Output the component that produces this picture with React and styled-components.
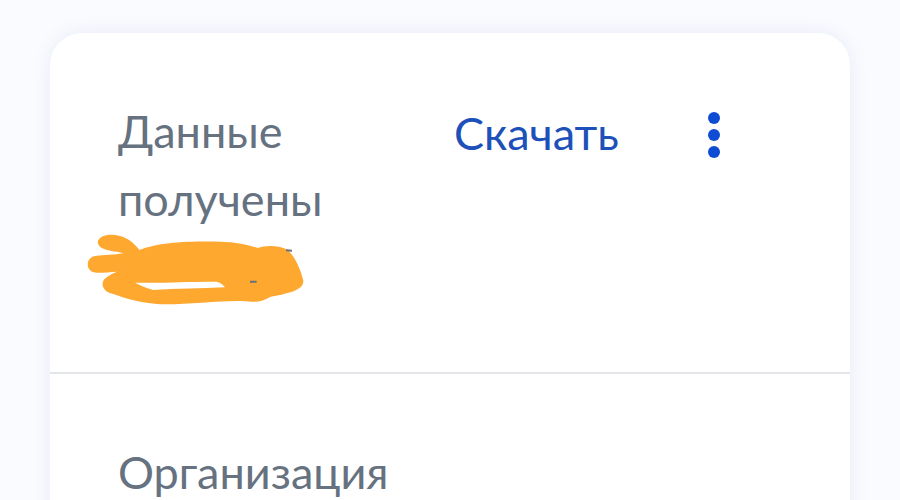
import React from "react";
import styled, { createGlobalStyle } from "styled-components";

const GlobalStyle = createGlobalStyle`
  html, body {
    margin: 0;
    height: 100%;
    overflow: hidden;
    background: #fafbfe;
  }
  body {
    font-family: "Lato", "Noto Sans", sans-serif;
  }
`;

export default function App() {
  return (
    <>
      <GlobalStyle />
      <Page>
        <Card>
          <TopSection>
            <Status>
              <Label>Данные получены</Label>
              <Scribble />
            </Status>
            <DownloadLink href="#">Скачать</DownloadLink>
            <MenuDots aria-label="Меню">
              <span />
              <span />
              <span />
            </MenuDots>
          </TopSection>
          <Section>
            <Label>Организация</Label>
          </Section>
        </Card>
      </Page>
    </>
  );
}

function Scribble() {
  return (
    <ScribbleSvg viewBox="0 0 780 330" aria-hidden="true">
      <path
        fill="#fea82f"
        fillRule="evenodd"
        d="M83 97 C86 76 120 70 150 78 C178 86 195 102 208 120 C270 98 330 94 450 95 C500 96 535 104 562 114 C590 104 630 106 654 120 C678 145 692 180 700 212 C700 237 672 247 602 260 C585 270 565 277 545 275 C480 266 340 287 260 282 C210 277 170 267 130 252 C103 247 93 228 100 212 C108 200 125 192 140 185 C115 186 85 191 72 187 C47 181 47 146 72 139 C95 134 130 136 160 130 C140 122 88 126 83 97 Z M195 218 C280 220 370 214 440 215 C452 218 460 225 465 232 C390 236 320 236 250 240 C230 235 210 226 195 218 Z"
      />
      <path fill="none" stroke="#66727f" strokeWidth="6" d="M648 121 L666 122 M540 215 L560 215" />
    </ScribbleSvg>
  );
}

const Page = styled.main`
  padding: 33px 50px 0;
`;
const Card = styled.article`
  background: #ffffff;
  border-radius: 32px;
  box-shadow: 0 0 18px rgba(80, 100, 210, 0.1);
  min-height: 600px;
`;
const TopSection = styled.section`
  display: grid;
  grid-template-columns: 336px 240px 40px;
  align-items: start;
  padding: 64px 68px 0;
  height: 275px;
  border-bottom: 2px solid #e3e5e8;
`;
const Status = styled.div`
  position: relative;
`;
const Label = styled.p`
  margin: 0;
  width: 260px;
  font-size: 45px;
  line-height: 68px;
  color: #66727f;
`;
const ScribbleSvg = styled.svg`
  position: absolute;
  left: -48px;
  top: 113px;
  width: 260px;
  height: 110px;
`;
const DownloadLink = styled.a`
  margin-top: 2px;
  font-size: 45px;
  line-height: 68px;
  color: #1d50b8;
  text-decoration: none;
`;
const MenuDots = styled.button`
  display: flex;
  flex-direction: column;
  align-items: center;
  gap: 5px;
  width: 40px;
  margin: 15px 0 0;
  padding: 0;
  border: 0;
  background: none;

  span {
    width: 12px;
    height: 12px;
    border-radius: 50%;
    background: #0d4cd3;
  }
`;
const Section = styled.section`
  padding: 64px 68px 0;
`;
